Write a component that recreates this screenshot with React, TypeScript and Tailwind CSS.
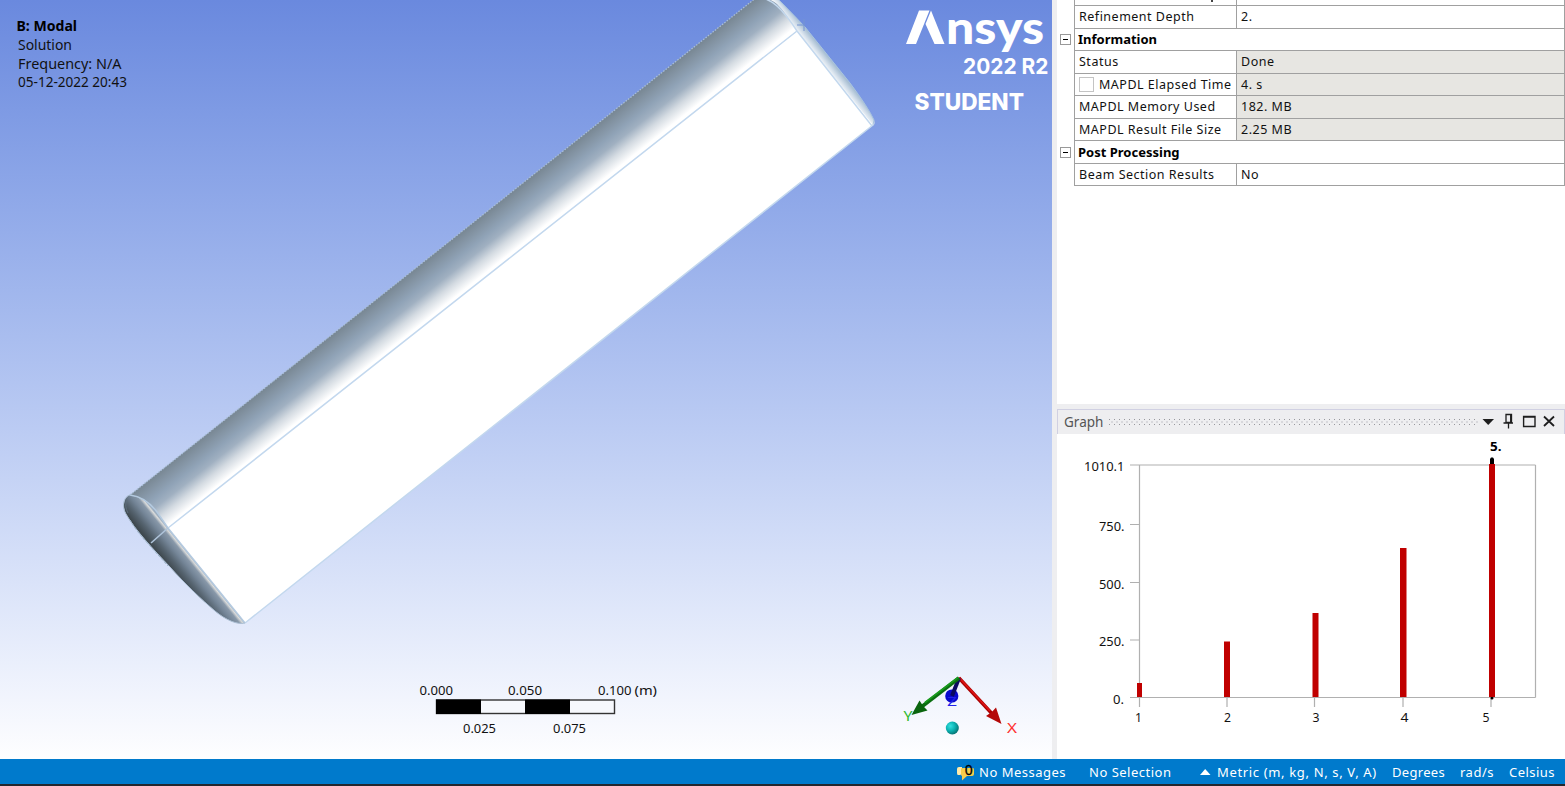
import React from "react";

type LabelProps = {
  x: number;
  y: number;
  w?: number;
  size?: number;
  fill?: string;
  weight?: number;
  className?: string;
  children: string;
};

function Label({ x, y, w, size = 13, fill = "#111", weight = 400, className, children }: LabelProps) {
  return (
    <text
      x={x}
      y={y}
      textLength={w}
      lengthAdjust="spacingAndGlyphs"
      fontSize={size}
      fontWeight={weight}
      fill={fill}
      className={className}
    >
      {children}
    </text>
  );
}

function Model() {
  return (
    <g>
      <path
        d="M757-3L778-1C790 11 797 18 805 27L850 83Q868 107 874 120Q876 125 872 126L797 31Z"
        fill="url(#endCap)"
      />
      <path
        d="M130 495L757-3Q768-3 777 4Q787 14 797 31L168 528Q148 498 130 495Z"
        fill="url(#curved)"
      />
      <path d="M168 528L797 31L873 125L245 623Z" fill="#fff" />
      <path
        d="M130 495C124 497 122 506 126 514C136 531 153 549 170 567C184 583 202 600 215 611C226 620 237 625 245 623L168 528Q150 498 130 495Z"
        fill="url(#tipCap)"
      />
      <g fill="none" stroke="#c3d8ee" strokeWidth="1.5">
        <path d="M168 528L797 31M245 623L873 125" />
        <path d="M757-3Q768-2 777 6Q786 14 797 31L872 126" />
        <path d="M130 495Q146 497 157 512L168 528L245 623" stroke="#b4cae0" />
        <path d="M151 543L168 528" stroke="#afc4da" strokeWidth="1.6" />
        <path
          d="M130 495C124 496 121 506 126 514C135 530 153 549 170 567C184 583 202 600 215 611C226 620 237 625 245 623"
          stroke="#a9bdd2"
          strokeWidth="1"
        />
      </g>
      <path d="M127 500Q124 506 128 513" stroke="#5d6d7c" strokeWidth="1" fill="none" />
      <path d="M130 520Q136 531 150 546L168 566" stroke="#9fb5ca" strokeWidth="1" strokeDasharray="3 1.5" fill="none" />
      <path d="M130 495L757-3" stroke="#a8bed6" strokeWidth="1.3" strokeDasharray="1.5 1.5" />
      <path d="M778-1L805 27L850 83Q868 107 874 120L873 125" stroke="#a9c4df" strokeWidth="1" fill="none" />
      <path d="M797 25h8M804 19v12" stroke="#7594d2" strokeWidth="1" />
    </g>
  );
}

function ScaleBar() {
  return (
    <g>
      <rect x="436.5" y="700" width="178" height="13.5" fill="#f6f8fd" stroke="#333" strokeWidth="1.4" />
      <rect x="436" y="699.5" width="45" height="14.5" fill="#000" />
      <rect x="525" y="699.5" width="45" height="14.5" fill="#000" />
      <Label x={419.5} y={695} w={33.5}>0.000</Label>
      <Label x={508} y={695} w={34}>0.050</Label>
      <Label x={598} y={695} w={33.5}>0.100</Label>
      <Label x={634.5} y={695} w={22.5}>(m)</Label>
      <Label x={463} y={733} w={33}>0.025</Label>
      <Label x={553} y={733} w={33}>0.075</Label>
    </g>
  );
}

function Triad() {
  return (
    <g>
      <path d="M959 678L996 718" stroke="#a80000" strokeWidth="3.4" />
      <path d="M959 677.5L990 711" stroke="#e01515" strokeWidth="1.6" />
      <path d="M1001.500 724L986 716Q992 713 996 707.500Z" fill="#b40808" />
      <circle cx="951.8" cy="696" r="6.6" fill="#0909cc" />
      <path d="M959 678L952 696" stroke="#0a0a60" strokeWidth="4" />
      <Label x={947} y={706} w={10} size={13} fill="#2222e8">Z</Label>
      <path d="M959 678L922 706.500" stroke="#0a6f10" strokeWidth="3.6" />
      <path d="M958 677.500L925 702.500" stroke="#189b1c" strokeWidth="1.6" />
      <path d="M911.500 715L919.500 700.500Q923 707 927.500 710.500Z" fill="#0a650e" />
      <Label x={903.5} y={721} w={9} size={15} fill="#2db92d">Y</Label>
      <Label x={1007} y={732.5} w={10} size={15} fill="#ff3030">X</Label>
      <circle cx="952.300" cy="728" r="6.500" fill="url(#ball)" />
    </g>
  );
}

function Viewport() {
  return (
    <section className="relative h-full w-[1052px] shrink-0 overflow-hidden bg-linear-to-b from-[#6a89de] to-[#fefeff]">
      <svg width="1052" height="759" viewBox="0 0 1052 759" className="block font-['Noto_Sans',sans-serif]">
        <defs>
          <linearGradient id="curved" gradientUnits="userSpaceOnUse" x1="130" y1="495" x2="160.700" y2="533.700">
            <stop offset="0" stopColor="#788793" />
            <stop offset="0.14" stopColor="#8292a1" />
            <stop offset="0.36" stopColor="#90a3b7" />
            <stop offset="0.52" stopColor="#a0b0c1" />
            <stop offset="0.72" stopColor="#d3dae1" />
            <stop offset="0.95" stopColor="#fff" />
          </linearGradient>
          <linearGradient id="tipCap" gradientUnits="userSpaceOnUse" x1="185" y1="586" x2="203" y2="571.400">
            <stop offset="0" stopColor="#3f494f" />
            <stop offset="0.3" stopColor="#566470" />
            <stop offset="0.6" stopColor="#748597" />
            <stop offset="0.82" stopColor="#8898a9" />
            <stop offset="0.94" stopColor="#dcdddc" />
            <stop offset="1" stopColor="#9badbf" />
          </linearGradient>
          <linearGradient id="endCap" gradientUnits="userSpaceOnUse" x1="830" y1="73" x2="842" y2="63.500">
            <stop offset="0" stopColor="#f4f7fa" />
            <stop offset="0.25" stopColor="#d2deea" />
            <stop offset="0.55" stopColor="#a9bfd3" />
            <stop offset="1" stopColor="#9bb4cb" />
          </linearGradient>
          <radialGradient id="ball" cx="0.35" cy="0.35" r="0.7">
            <stop offset="0" stopColor="#35e0e0" />
            <stop offset="0.5" stopColor="#0cb4b4" />
            <stop offset="1" stopColor="#067070" />
          </radialGradient>
        </defs>
        <Model />
        <Label x={16.500} y={31} w={60.500} size={13.5} weight={700} fill="#000">B: Modal</Label>
        <Label x={18} y={50} w={54} size={13.5}>Solution</Label>
        <Label x={18} y={68.500} w={103.500} size={13.5}>Frequency: N/A</Label>
        <Label x={18} y={87} w={109} size={13.5}>05-12-2022 20:43</Label>
        <path d="M919 10.500H929.500L916 44H906ZM931 10.500L944.500 44H934.500L925.500 24Z" fill="#fff" />
        <Label x={946} y={44} w={98} size={45} weight={900} fill="#fff" className="font-['Lato']">nsys</Label>
        <Label x={963} y={73.500} w={85.500} size={22} weight={700} fill="#fff" className="font-['Inter']">2022 R2</Label>
        <Label x={914.500} y={109.500} w={109.500} size={22.5} weight={800} fill="#fff" className="font-['Inter']">STUDENT</Label>
        <ScaleBar />
        <Triad />
      </svg>
    </section>
  );
}

type PropertyRow = { label: string; value?: string; shaded?: boolean; group?: boolean; check?: boolean };

const rows: PropertyRow[] = [
  { label: "Refinement Depth", value: "2." },
  { label: "Information", group: true },
  { label: "Status", value: "Done", shaded: true },
  { label: "MAPDL Elapsed Time", value: "4. s", shaded: true, check: true },
  { label: "MAPDL Memory Used", value: "182. MB", shaded: true },
  { label: "MAPDL Result File Size", value: "2.25 MB", shaded: true },
  { label: "Post Processing", group: true },
  { label: "Beam Section Results", value: "No" },
];

function Details() {
  return (
    <div className="h-[404px] overflow-hidden bg-white text-[12.5px] leading-none text-[#111]">
      <div className="ml-[17px] flex h-[6px] w-[491px] items-start overflow-hidden border border-t-0 border-[#a0a0a0]">
        <div className="h-full w-[162px] border-r border-[#a0a0a0]">
          <div className="ml-[136px] h-[2px] w-[2px] bg-[#444]" />
        </div>
      </div>
      {rows.map((row) => (
        <div key={row.label} className="flex h-[22.5px] items-stretch">
          <div className="flex w-[17px] items-center pl-[3px]">
            {row.group && (
              <span className="flex size-[11px] items-center justify-center border border-[#999]">
                <span className="h-px w-[5px] bg-black" />
              </span>
            )}
          </div>
          <div className="flex w-[491px] border-x border-b border-[#a0a0a0]">
            {row.group ? (
              <div className="flex items-center pt-px pl-[3px] text-[13px] font-bold text-black">{row.label}</div>
            ) : (
              <>
                <div className="flex w-[162px] items-center border-r border-[#a0a0a0] pt-px pl-1 tracking-[0.5px] whitespace-nowrap">
                  {row.check && <span className="mr-[5px] size-[15px] shrink-0 border border-[#c4c4c4] bg-white" />}
                  {row.label}
                </div>
                <div className={`flex flex-1 items-center pt-px pl-1 tracking-[0.5px] ${row.shaded ? "bg-[#e7e6e2]" : "bg-white"}`}>
                  {row.value}
                </div>
              </>
            )}
          </div>
        </div>
      ))}
    </div>
  );
}

function GraphHeader() {
  return (
    <header className="flex h-[25px] items-center border border-b-0 border-[#d0d0e2] bg-[#eeeef0] pl-[6px]">
      <span className="w-[45px] text-[13.5px] text-[#555]">Graph</span>
      <svg width="369" height="7" className="shrink-0">
        <defs>
          <pattern id="grip" width="5" height="5" patternUnits="userSpaceOnUse">
            <rect width="1" height="1" x="0" y="0" fill="#98989d" />
            <rect width="1" height="1" x="2.500" y="2.500" fill="#98989d" />
          </pattern>
        </defs>
        <rect width="369" height="6" fill="url(#grip)" />
      </svg>
      <svg width="84" height="20" className="shrink-0" fill="none" stroke="#1e1e1e">
        <path d="M4.500 7H16L10.200 13Z" fill="#1e1e1e" stroke="none" />
        <path d="M28 2.500H33.500V10.500H28ZM25.500 11H35M30.500 11V16.500" strokeWidth="1.300" />
        <path d="M32.800 3V11" strokeWidth="1.500" />
        <path d="M45.600 4.500H57V14.500H45.600ZM45.600 5H57" strokeWidth="1.400" />
        <path d="M66 4.500L76 14M76 4.500L66 14" strokeWidth="1.800" />
      </svg>
    </header>
  );
}

const bars = [
  { x: 80, w: 5, top: 249 },
  { x: 167, w: 6, top: 207.500 },
  { x: 255.500, w: 6, top: 179 },
  { x: 343, w: 6.500, top: 114 },
  { x: 432, w: 6, top: 30 },
];

function Chart() {
  return (
    <svg width="508" height="325" viewBox="0 0 508 325" className="block bg-white font-['Noto_Sans',sans-serif]">
      <path
        d="M73 31H478.500M82.500 31V273M478.500 31V263.500M73 90.500H82M73 148.500H82M73 206H82M73 263.500H478.500M170 263V273M257.500 263V273M346 263V273M434 263V273"
        stroke="#b0b0b0"
        strokeWidth="1.200"
        fill="none"
      />
      <path d="M433 25L434 23.500H436L437 25V30H433Z" fill="#000" />
      <circle cx="435" cy="264" r="1.500" fill="#000" />
      {bars.map((bar) => (
        <rect key={bar.x} x={bar.x} y={bar.top} width={bar.w} height={263 - bar.top} fill="#c00000" />
      ))}
      <Label x={27} y={37} w={40.5}>1010.1</Label>
      <Label x={42} y={97} w={25.5}>750.</Label>
      <Label x={42} y={154.500} w={25.5}>500.</Label>
      <Label x={42} y={212} w={25.5}>250.</Label>
      <Label x={56} y={269.500} w={11}>0.</Label>
      <Label x={78} y={288} w={7}>1</Label>
      <Label x={167} y={288} w={7}>2</Label>
      <Label x={255.500} y={288} w={7}>3</Label>
      <Label x={343.500} y={288} w={8}>4</Label>
      <Label x={425.500} y={288} w={7}>5</Label>
      <Label x={433} y={17} w={11.500} weight={700} fill="#000">5.</Label>
    </svg>
  );
}

function StatusBar() {
  return (
    <footer className="flex h-[27px] items-center border-b-2 border-[#24272e] bg-[#007acc] pl-[956px] text-[13px] whitespace-nowrap text-white">
      <svg width="19" height="25" className="mr-1 shrink-0">
        <path d="M1 10Q1 8 3 8H6V15L4 16H2Q1 16 1 14Z" fill="#ffeaa8" />
        <path d="M5 10Q5 9 7 9H17Q18 9 18 11V15Q18 17 16 17H11L6 21.500V17Q5 17 5 15Z" fill="#f6cd4c" />
        <text x="8.800" y="15.500" fontSize="13.500" textLength="8" lengthAdjust="spacingAndGlyphs" fill="#000" stroke="#000" strokeWidth="0.300">0</text>
      </svg>
      <span className="w-[110px] pt-[3px] tracking-[0.5px]">No Messages</span>
      <span className="w-[111px] pt-[3px] tracking-[0.5px]">No Selection</span>
      <svg width="11" height="6" className="mr-[6px] shrink-0"><path d="M0 6H10.500L5.200 0Z" fill="#fff" /></svg>
      <span className="w-[175px] pt-[3px] tracking-[0.65px]">Metric (m, kg, N, s, V, A)</span>
      <span className="w-[68px] pt-[3px] tracking-[0.3px]">Degrees</span>
      <span className="w-[49px] pt-[3px] tracking-[0.5px]">rad/s</span>
      <span className="pt-[3px] tracking-[0.45px]">Celsius</span>
    </footer>
  );
}

export default function App() {
  return (
    <div className="flex h-[786px] w-[1565px] flex-col overflow-hidden bg-white font-['Noto_Sans',sans-serif]">
      <main className="flex h-[759px] shrink-0">
        <Viewport />
        <div className="w-[5px] shrink-0 bg-[#eeeef0]" />
        <aside className="flex w-[508px] shrink-0 flex-col">
          <Details />
          <div className="h-[5px] shrink-0 bg-[#eeeef0]" />
          <GraphHeader />
          <Chart />
        </aside>
      </main>
      <StatusBar />
    </div>
  );
}
